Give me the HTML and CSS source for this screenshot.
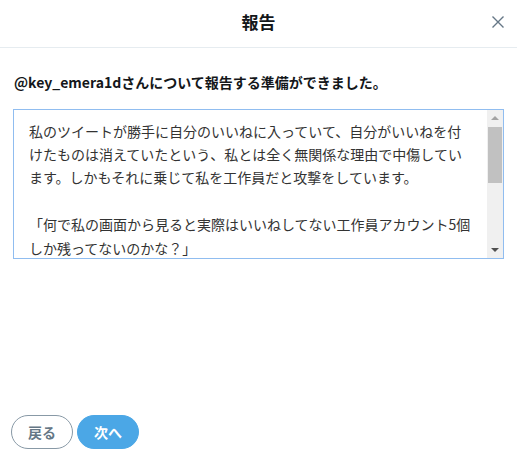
FILE: index.html
```html
<!DOCTYPE html>
<html lang="ja">
<head>
    <meta charset="utf-8">
    <meta name="viewport" content="width=device-width, initial-scale=1.0">
    <title>報告</title>
    <link rel="stylesheet" href="styles.css">
</head>
<body>
    <div class="modal">
        <div class="modal-header">
            <h2 class="modal-title">報告</h2>
            <button class="close-btn" aria-label="閉じる">
                <svg width="12" height="12" viewBox="0 0 12 12">
                    <path d="M0.5 0.5 L11.5 11.5 M11.5 0.5 L0.5 11.5" stroke="#657786" stroke-width="1.4" fill="none"/>
                </svg>
            </button>
        </div>
        <div class="modal-body">
            <p class="lead">@key_emera1dさんについて報告する準備ができました。</p>
            <div class="comment-box">
                <div class="comment-text">
                    <p>私のツイートが勝手に自分のいいねに入っていて、自分がいいねを付けたものは消えていたという、私とは全く無関係な理由で中傷しています。しかもそれに乗じて私を工作員だと攻撃をしています。</p>
                    <p>「何で私の画面から見ると実際はいいねしてない工作員アカウント5個しか残ってないのかな？」</p>
                </div>
                <div class="scrollbar">
                    <div class="scroll-btn"><span class="arrow-up"></span></div>
                    <div class="scroll-track">
                        <div class="scroll-thumb"></div>
                    </div>
                    <div class="scroll-btn"><span class="arrow-down"></span></div>
                </div>
            </div>
        </div>
        <div class="modal-footer">
            <button class="btn btn-back">戻る</button>
            <button class="btn btn-next">次へ</button>
        </div>
    </div>
</body>
</html>
```

FILE: styles.css
```css
body {
    margin: 0;
    font-family: "Noto Sans CJK JP", "Noto Sans", sans-serif;
    color: #14171a;
    background: #fff;
}
.modal {
    width: 517px;
    height: 455px;
    display: flex;
    flex-direction: column;
}
.modal-header {
    height: 47px;
    border-bottom: 1px solid #e6ecf0;
    display: flex;
    align-items: center;
    justify-content: center;
    position: relative;
}
.modal-title {
    margin: 0;
    font-size: 17px;
    font-weight: bold;
    line-height: 20px;
    margin-top: -3px;
}
.close-btn {
    position: absolute;
    right: 13px;
    top: 16px;
    width: 12px;
    height: 12px;
    padding: 0;
    border: 0;
    background: none;
    display: flex;
}
.modal-body {
    padding: 24px 13px 0;
}
.lead {
    margin: 0 0 17px 1px;
    font-size: 14px;
    font-weight: bold;
    line-height: 20px;
}
.comment-box {
    height: 148px;
    width: 489px;
    border: 1px solid #90bdf0;
    display: flex;
}
.comment-text {
    flex: 1;
    overflow: hidden;
    padding: 9.5px 15px 0 15px;
    font-size: 14px;
    line-height: 23.4px;
    color: #333;
}
.comment-text p {
    margin: 0 0 23.4px;
}
.scrollbar {
    width: 16px;
    background: #f0f0f0;
    display: flex;
    flex-direction: column;
}
.scroll-btn {
    height: 16px;
    display: flex;
    align-items: center;
    justify-content: center;
}
.arrow-up {
    width: 0;
    height: 0;
    border-left: 4px solid transparent;
    border-right: 4px solid transparent;
    border-bottom: 4px solid #a3a3a3;
}
.arrow-down {
    width: 0;
    height: 0;
    border-left: 4px solid transparent;
    border-right: 4px solid transparent;
    border-top: 4px solid #505050;
}
.scroll-track {
    flex: 1;
    padding: 1px 1px 0;
}
.scroll-thumb {
    height: 56px;
    background: #c1c1c1;
}
.modal-footer {
    margin-top: auto;
    padding: 0 0 6px 11px;
    display: flex;
    gap: 4px;
}
.btn {
    width: 62px;
    height: 34px;
    border-radius: 17px;
    font-family: inherit;
    font-size: 14px;
    font-weight: bold;
    padding: 0;
}
.btn-back {
    background: #fff;
    border: 1px solid #8899a6;
    color: #657786;
}
.btn-next {
    background: #4ba7e6;
    border: 1px solid #4ba7e6;
    color: #fff;
}
```
